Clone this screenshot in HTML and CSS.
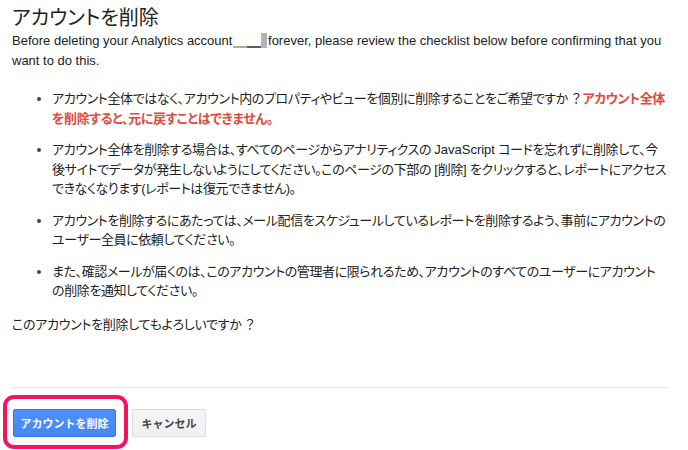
FILE: index.html
```html
<!DOCTYPE html>
<html lang="ja">
<head>
<meta charset="utf-8">
<title>アカウントを削除</title>
<link rel="stylesheet" href="styles.css">
</head>
<body>
<main class="dialog">
  <h1 class="title">アカウントを削除</h1>
  <p class="intro">Before deleting your Analytics account <span class="redact"><span class="r1"></span><span class="r2"></span><span class="r3"></span></span>forever, please review the checklist below before confirming that you want to do this.</p>
  <ul class="checklist">
    <li>アカウント全体ではなく、アカウント内のプロパティやビューを個別に削除することをご希望ですか<span class="fw">？</span><strong class="warn">アカウント全体<br>を削除すると、元に戻すことはできません。</strong></li>
    <li>アカウント全体を削除する場合は、すべてのページからアナリティクスの <span class="lat">JavaScript</span> コードを忘れずに削除して、今<br>後サイトでデータが発生しないようにしてください。このページの下部の <span class="lat">[</span>削除<span class="lat">]</span> をクリックすると、レポートにアクセス<br>できなくなります(レポートは復元できません)。</li>
    <li>アカウントを削除するにあたっては、メール配信をスケジュールしているレポートを削除するよう、事前にアカウントの<br>ユーザー全員に依頼してください。</li>
    <li>また、確認メールが届くのは、このアカウントの管理者に限られるため、アカウントのすべてのユーザーにアカウント<br>の削除を通知してください。</li>
  </ul>
  <p class="question">このアカウントを削除してもよろしいですか<span class="fw">？</span></p>
  <div class="actions">
    <button class="btn btn-primary" type="button">アカウントを削除</button>
    <button class="btn btn-default" type="button">キャンセル</button>
    <span class="highlight"></span>
  </div>
</main>
</body>
</html>
```
FILE: styles.css
```css
html, body {
  margin: 0;
  padding: 0;
  background: #fff;
}

body {
  font-family: "Liberation Sans", "Noto Sans CJK JP", sans-serif;
  font-size: 13px;
  color: #222;
  font-feature-settings: "palt";
}

.dialog {
  width: 656px;
  padding: 5px 0 0 12px;
}

.title {
  margin: 0;
  font-size: 20px;
  line-height: 26px;
  font-weight: normal;
  color: #222;
}

.intro {
  margin: 0;
  line-height: 20px;
}

.redact {
  display: inline-flex;
  align-items: flex-end;
  height: 15px;
  vertical-align: -3px;
  margin-left: -3px;
  margin-right: 1px;
}

.r1 {
  width: 14px;
  height: 2px;
  background: #c4a784;
}

.r2 {
  width: 14px;
  height: 2px;
  background: #625b66;
}

.r3 {
  width: 6px;
  height: 15px;
  background: #b8b0bd;
}

.checklist {
  margin: 17px 0 0;
  padding-left: 40px;
  letter-spacing: -0.4px;
}

.checklist li {
  line-height: 19.5px;
  margin-bottom: 12px;
  color: #222;
}

.checklist li::marker {
  color: #444;
  font-size: 14px;
}

.fw {
  font-family: "Noto Sans CJK JP", sans-serif;
  font-feature-settings: normal;
  margin-left: 2px;
}

.lat {
  font-family: "Liberation Sans", sans-serif;
  letter-spacing: 0;
}

.warn {
  color: #dd4b39;
  font-weight: bold;
}

.question {
  margin: 13px 0 0;
  line-height: 20px;
  letter-spacing: -0.3px;
}

.actions {
  position: relative;
  display: flex;
  gap: 16px;
  margin-top: 52px;
  border-top: 1px solid #e5e5e5;
  padding: 21px 0 15px 1px;
}

.btn {
  height: 28px;
  padding: 0;
  border-radius: 2px;
  font-family: "Liberation Sans", "Noto Sans CJK JP", sans-serif;
  font-size: 11px;
  font-weight: bold;
  white-space: nowrap;
  cursor: pointer;
}

.btn-primary {
  width: 103px;
  color: #fff;
  background: linear-gradient(#4d90fe, #4787ed);
  border: 1px solid #3079ed;
}

.btn-default {
  width: 74px;
  color: #444;
  background: linear-gradient(#f5f5f5, #f1f1f1);
  border: 1px solid #dcdcdc;
}

.highlight {
  position: absolute;
  left: -9px;
  top: 7px;
  width: 117px;
  height: 46px;
  border: 4px solid #f5135f;
  border-radius: 11px;
  pointer-events: none;
}
```
